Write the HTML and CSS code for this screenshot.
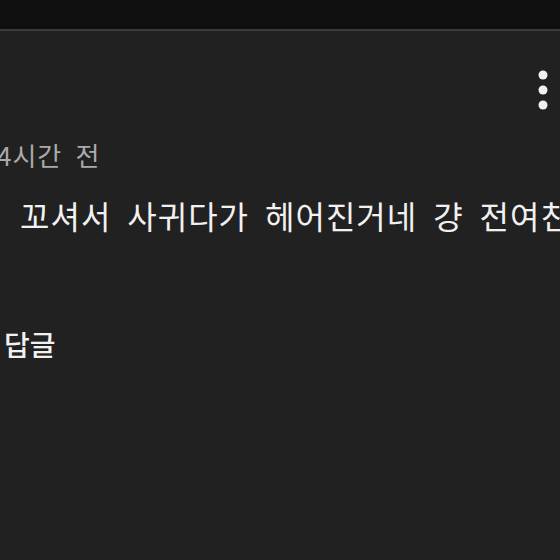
FILE: index.html
```html
<!DOCTYPE html>
<html lang="ko">
<head>
<meta charset="utf-8">
<link rel="stylesheet" href="styles.css">
</head>
<body>
<div class="topbar"></div>
<div class="comment">
  <div class="content">
    <div class="time">4시간 전</div>
    <div class="text">꼬셔서 사귀다가 헤어진거네 걍 전여친</div>
    <div class="reply">답글</div>
  </div>
  <button class="menu" aria-label="메뉴">
    <svg width="20" height="44" viewBox="0 0 20 44"><circle cx="10" cy="7" r="4.5" fill="#f1f1f1"/><circle cx="10" cy="22" r="4.5" fill="#f1f1f1"/><circle cx="10" cy="37" r="4.5" fill="#f1f1f1"/></svg>
  </button>
</div>
</body>
</html>
```
FILE: styles.css
```css
html, body {
  margin: 0;
  padding: 0;
  background: #212121;
  height: 100%;
  overflow: hidden;
}
body {
  font-family: "Noto Sans CJK KR", "Noto Sans", sans-serif;
}
.topbar {
  height: 29px;
  background: #0f0f0f;
  border-bottom: 2px solid #3a3a3a;
}
.comment {
  display: flex;
  align-items: flex-start;
}
.content {
  flex: 1;
  min-width: 0;
  padding-top: 107px;
  display: flex;
  flex-direction: column;
}
.time {
  font-size: 26px;
  line-height: 34px;
  color: #aaaaaa;
  margin-left: -3px;
  letter-spacing: 1px;
  word-spacing: 5px;
  white-space: nowrap;
}
.text {
  margin-top: 22px;
  font-size: 32px;
  line-height: 42px;
  color: #f1f1f1;
  padding-left: 20px;
  letter-spacing: 1px;
  word-spacing: 6px;
  white-space: nowrap;
}
.reply {
  margin-top: 90px;
  font-size: 28px;
  line-height: 36px;
  font-weight: 500;
  color: #f1f1f1;
  padding-left: 4px;
}
.menu {
  margin: 37px 7px 0 0;
  padding: 0;
  border: 0;
  background: none;
  width: 20px;
  height: 44px;
  display: block;
}
.menu svg { display: block; }
```
